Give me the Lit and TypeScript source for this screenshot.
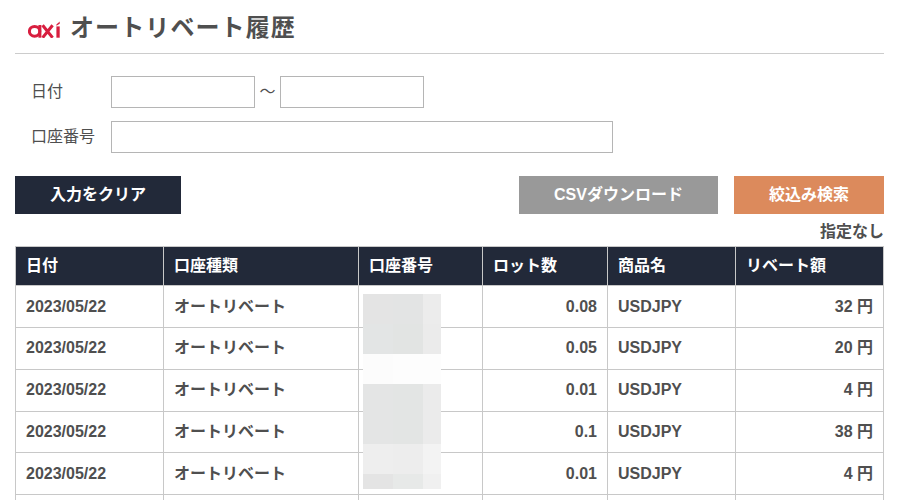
import { LitElement, html, css, svg } from "lit";
import { customElement } from "lit/decorators.js";

const rows = [
  ["2023/05/22", "オートリベート", "0.08", "USDJPY", "32 円"],
  ["2023/05/22", "オートリベート", "0.05", "USDJPY", "20 円"],
  ["2023/05/22", "オートリベート", "0.01", "USDJPY", "4 円"],
  ["2023/05/22", "オートリベート", "0.1", "USDJPY", "38 円"],
  ["2023/05/22", "オートリベート", "0.01", "USDJPY", "4 円"],
  ["", "", "", "", ""],
];

@customElement("app-root")
export class AppRoot extends LitElement {
  static styles = css`
    :host {
      display: block;
      width: 900px;
      height: 500px;
      overflow: hidden;
      background: #fff;
      color: #4f4f4f;
      font-family: "Liberation Sans", "Noto Sans CJK JP", sans-serif;
      font-size: 16px;
      line-height: 20px;
    }
    .page { position: relative; padding: 0 16px 0 15px; height: 500px; box-sizing: border-box; overflow: hidden; }
    .title {
      border-bottom: 1px solid #ccc;
      display: flex;
      align-items: center;
      padding: 2px 0 0 13px;
      box-sizing: content-box;
      height: 51px;
      gap: 9px;
    }
    .title svg { display: block; margin-top: 4px; }
    h1 { margin: 0; font-size: 24px; line-height: 30px; font-weight: 700; letter-spacing: 1.1px; }
    .form { padding: 22px 0 0 16px; display: grid; grid-template-columns: 80px 1fr; row-gap: 13px; }
    .label { line-height: 31px; font-size: 16px; }
    .dates { display: flex; align-items: center; }
    .tilde { width: 25px; text-align: center; font-size: 16px; line-height: 31px; height: 32px; }
    input {
      display: block; box-sizing: border-box; height: 32px; border: 1px solid #b5b5b5;
      padding: 0; margin: 0; background: #fff; border-radius: 0; outline: none;
    }
    .date { width: 144px; }
    .acct { width: 502px; }
    .buttons { display: flex; margin-top: 23px; }
    .btn {
      height: 38px; display: flex; align-items: center; justify-content: center;
      color: #fff; font-weight: 700; font-size: 16px; box-sizing: border-box;
    }
    .clear { width: 166px; background: #222939; }
    .csv { width: 199px; background: #999; margin-left: auto; }
    .search { width: 150px; background: #dc8a5c; margin-left: 16px; }
    .note { text-align: right; font-weight: 700; font-size: 16px; line-height: 20px; margin-top: 8px; height: 24px; }
    table { border-collapse: collapse; table-layout: fixed; width: 868px; }
    th, td { border: 1px solid #c8c8c8; padding: 0 10px; box-sizing: border-box; font-weight: 700; white-space: nowrap; overflow: hidden; }
    th { background: #222939; color: #fff; text-align: left; height: 39.2px; }
    td { height: 41.8px; font-size: 16px; }
    .r { text-align: right; }
    .mosaic {
      position: absolute; left: 363px; top: 294px; width: 78px; height: 195px;
      display: grid; grid-template-columns: 30px 30px 18px; grid-template-rows: 30px 30px 30px 30px 30px 30px 15px;
    }
    .mosaic i { display: block; }
  `;

  private logo() {
    return html`<svg width="33" height="17" viewBox="0 0 33 17" aria-label="axi">
      ${svg`
        <ellipse cx="6.6" cy="10.3" rx="5.2" ry="4.9" fill="none" stroke="#d81e3f" stroke-width="3"/>
        <rect x="10.4" y="4" width="3" height="12.7" fill="#d81e3f"/>
        <path d="M14.6 4.2 L24.6 16.7 M24.6 4.2 L14.6 16.7" fill="none" stroke="#d81e3f" stroke-width="3"/>
        <rect x="28.4" y="5.4" width="3.3" height="11.3" fill="#d81e3f"/>
        <path d="M28.4 3.6 L31.7 0.4 V2.8 L28.4 4.8 Z" fill="#d81e3f"/>
      `}
    </svg>`;
  }

  private mosaic() {
    const cells = [
      "#e4e4e4","#e3e4e4","#ececec",
      "#e3e5e5","#e2e4e3","#ebebeb",
      "#fcfcfc","#fdfdfd","#fdfdfd",
      "#e4e5e5","#e3e5e4","#ebebeb",
      "#e4e5e5","#e3e5e4","#ebebeb",
      "#eeeeee","#ededed","#f3f3f3",
      "#e4e4e4","#e7e9e8","#f0f0f0",
    ];
    return html`<div class="mosaic">${cells.map((c) => html`<i style="background:${c}"></i>`)}</div>`;
  }

  render() {
    return html`
      <div class="page">
        <div class="title">${this.logo()}<h1>オートリベート履歴</h1></div>
        <div class="form">
          <div class="label">日付</div>
          <div class="dates"><input class="date" /><span class="tilde">～</span><input class="date" /></div>
          <div class="label">口座番号</div>
          <div><input class="acct" /></div>
        </div>
        <div class="buttons">
          <div class="btn clear">入力をクリア</div>
          <div class="btn csv">CSVダウンロード</div>
          <div class="btn search">絞込み検索</div>
        </div>
        <div class="note">指定なし</div>
        <table>
          <colgroup>
            <col style="width:148px" /><col style="width:195px" /><col style="width:124px" />
            <col style="width:125px" /><col style="width:128px" /><col style="width:148px" />
          </colgroup>
          <thead><tr><th>日付</th><th>口座種類</th><th>口座番号</th><th>ロット数</th><th>商品名</th><th>リベート額</th></tr></thead>
          <tbody>
            ${rows.map((r) => html`<tr>
              <td>${r[0]}</td><td>${r[1]}</td><td></td>
              <td class="r">${r[2]}</td><td>${r[3]}</td><td class="r">${r[4]}</td>
            </tr>`)}
          </tbody>
        </table>
        ${this.mosaic()}
      </div>
    `;
  }
}
